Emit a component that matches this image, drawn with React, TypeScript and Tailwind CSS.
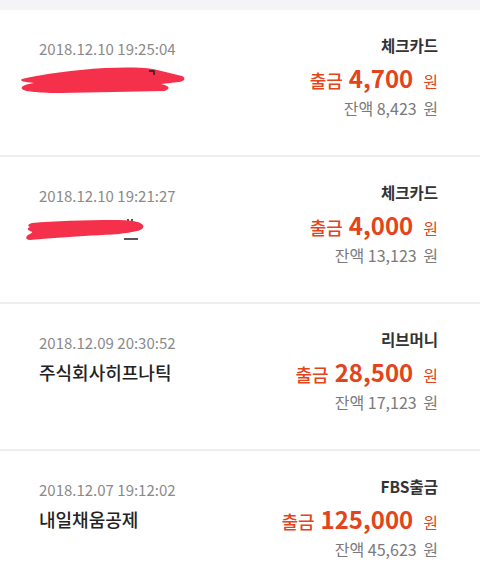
const FONT = "font-['Noto_Sans_CJK_KR','Noto_Sans',sans-serif]";

type Tx = {
  date: string;
  name: string | null;
  blur?: 1 | 2;
  method: string;
  amount: string;
  balance: string;
};

const txs: Tx[] = [
  { date: "2018.12.10 19:25:04", name: null, blur: 1, method: "체크카드", amount: "4,700", balance: "8,423" },
  { date: "2018.12.10 19:21:27", name: null, blur: 2, method: "체크카드", amount: "4,000", balance: "13,123" },
  { date: "2018.12.09 20:30:52", name: "주식회사히프나틱", method: "리브머니", amount: "28,500", balance: "17,123" },
  { date: "2018.12.07 19:12:02", name: "내일채움공제", method: "FBS출금", amount: "125,000", balance: "45,623" },
];

// red marker scribbles hiding the merchant name
function Scribble({ kind }: { kind: 1 | 2 }) {
  if (kind === 1) {
    return (
      <svg width="168" height="30" viewBox="0 0 168 30" className="-ml-[20px] mt-[2px]">
        <path
          d="M3,15 C20,11 40,8 62,6 C92,3 118,3 134,5 L163,12 C167,14 166,17 160,18 L142,20 C151,22 152,25 145,27 L42,29 C22,29 6,28 3,25 C1,22 8,20 15,19 C5,18 0,17 3,15 Z"
          fill="#f5304a"
        />
        <path d="M130,7 L135,7 L135,11" stroke="#222" strokeWidth="1.5" fill="none" />
      </svg>
    );
  }
  return (
    <svg width="126" height="30" viewBox="0 0 126 30" className="-ml-[15px] translate-y-[5px]">
      <path d="M104,4 L104,12 M108,4 L108,12 M100,24 L114,24" stroke="#222" strokeWidth="1.5" fill="none" />
      <path
        d="M8,8 C30,6 60,5 90,5 C105,5 116,6 119,10 C121,14 115,16 108,17 C100,19 80,20 60,21 C40,22 20,24 6,25 C2,25 1,22 4,20 C8,18 10,17 6,16 C3,15 3,13 6,12 C3,11 4,9 8,8 Z"
        fill="#f5304a"
      />
    </svg>
  );
}

function Row({ tx }: { tx: Tx }) {
  return (
    <div className="flex h-[147px] justify-between border-b-2 border-[#eeeeef] bg-white pl-[39px] pr-[42px]">
      <div className="flex flex-col pt-[29px]">
        <div className="text-[15px] leading-[20px] text-[#8a8a8a]">{tx.date}</div>
        <div className="mt-[6px] flex h-[26px] items-center">
          {tx.name ? (
            <span className="text-[18px] font-medium leading-[26px] text-[#222]">{tx.name}</span>
          ) : (
            <Scribble kind={tx.blur ?? 1} />
          )}
        </div>
      </div>
      <div className="flex flex-col items-end pt-[25px]">
        <div className="text-[15.5px] font-bold leading-[20px] text-[#333]">{tx.method}</div>
        <div className="mt-[8px] flex h-[30px] items-baseline gap-[6px] text-[#e4441b]">
          <span className="text-[18px] font-medium">출금</span>
          <span className="text-[24px] font-bold leading-[30px]">{tx.amount}</span>
          <span className="ml-[4px] text-[16px]">원</span>
        </div>
        <div className="mt-[4px] text-[16px] leading-[22px] text-[#7a7a7a]">
          잔액 {tx.balance} <span className="ml-[3px]">원</span>
        </div>
      </div>
    </div>
  );
}

export default function App() {
  return (
    <main className={`${FONT} min-h-screen w-[480px] bg-white`}>
      <div className="h-[10px] bg-[#f4f4f6]" />
      {txs.map((tx) => (
        <Row key={tx.date} tx={tx} />
      ))}
    </main>
  );
}
